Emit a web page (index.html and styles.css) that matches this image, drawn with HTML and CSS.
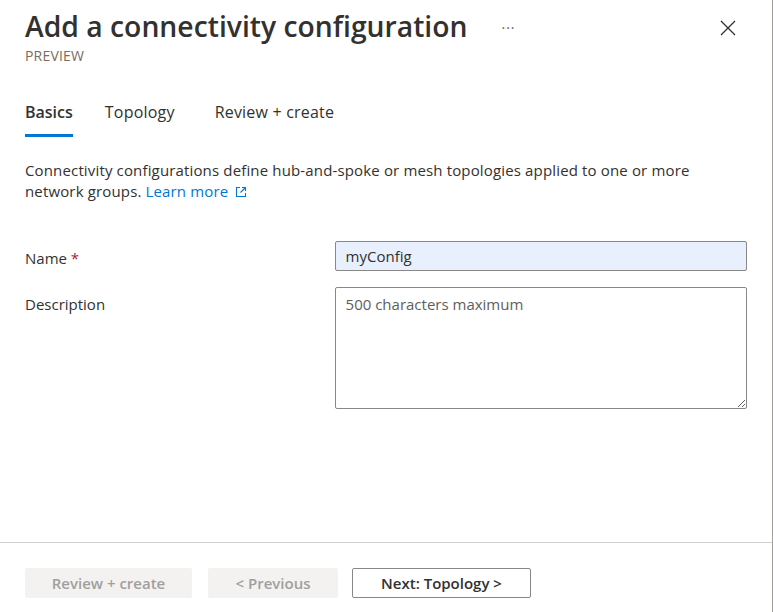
FILE: index.html
```html
<!DOCTYPE html>
<html lang="en">
<head>
<meta charset="utf-8">
<title>Add a connectivity configuration</title>
<link rel="stylesheet" href="styles.css">
</head>
<body>
<div class="blade">
  <div class="main">
    <header class="head">
      <div class="head-text">
        <div class="title-row">
          <h1 class="title">Add a connectivity configuration</h1>
          <span class="more">···</span>
        </div>
        <div class="preview">PREVIEW</div>
      </div>
      <button class="close" aria-label="Close">
        <svg width="16" height="16" viewBox="0 0 16 16"><path d="M1 1 L15 15 M15 1 L1 15" stroke="#323130" stroke-width="1.3" fill="none"/></svg>
      </button>
    </header>

    <nav class="tabs">
      <span class="tab active">Basics</span>
      <span class="tab">Topology</span>
      <span class="tab">Review + create</span>
    </nav>

    <p class="intro">Connectivity configurations define hub-and-spoke or mesh topologies applied to one or more network groups.<a class="link" href="#">Learn more<svg class="ext" width="12" height="12" viewBox="0 0 12 12"><path d="M5 1.5 H1.5 V10.5 H10.5 V7 M7 1.5 H10.5 V5 M10.5 1.5 L5.5 6.5" stroke="#0078d4" stroke-width="1.1" fill="none"/></svg></a></p>

    <div class="form">
      <div class="row">
        <label class="label">Name <span class="req">*</span></label>
        <input class="input" type="text" value="myConfig">
      </div>
      <div class="row">
        <label class="label">Description</label>
        <textarea class="textarea" placeholder="500 characters maximum"></textarea>
      </div>
    </div>
  </div>

  <footer class="footer">
    <button class="btn disabled">Review + create</button>
    <button class="btn disabled prev">&lt; Previous</button>
    <button class="btn primary">Next: Topology &gt;</button>
  </footer>
</div>
</body>
</html>
```

FILE: styles.css
```css
* { box-sizing: border-box; }
html, body { margin: 0; height: 100%; }
body {
  font-family: "Open Sans", "Noto Sans", sans-serif;
  color: #323130;
  background: #fff;
}
.blade {
  width: 773px;
  height: 612px;
  border-right: 1px solid #a19f9d;
  display: flex;
  flex-direction: column;
}
.main {
  flex: 1;
  padding: 0 25px;
}
.head {
  display: flex;
  justify-content: space-between;
  align-items: flex-start;
  padding-top: 8px;
}
.title-row {
  display: flex;
  align-items: center;
}
.title {
  margin: 0;
  font-size: 28.3px;
  font-weight: 600;
  line-height: 36px;
  letter-spacing: 0;
}
.more {
  margin-left: 34px;
  font-size: 14px;
  color: #605e5c;
  letter-spacing: 1px;
  position: relative;
  top: 1px;
}
.preview {
  font-size: 14px;
  letter-spacing: 0.2px;
  color: #7d6b5d;
  margin-top: 3px;
  line-height: 18px;
}
.close {
  border: 0;
  background: none;
  padding: 0;
  margin: 12px 11px 0 0;
  width: 16px;
  height: 16px;
  display: flex;
}
.tabs {
  display: flex;
  gap: 32px;
  margin-top: 35px;
}
.tab {
  font-size: 16px;
  letter-spacing: 0.2px;
  line-height: 24px;
  padding-bottom: 10px;
  border-bottom: 3px solid transparent;
  color: #323130;
}
.tab:nth-child(2) { margin-right: 8px; }
.tab.active {
  font-weight: 600;
  letter-spacing: 0;
  border-bottom-color: #0078d4;
}
.intro {
  margin: 23px 0 0;
  font-size: 15px;
  letter-spacing: 0.15px;
  line-height: 21px;
  color: #323130;
  max-width: 700px;
}
.link {
  color: #0078d4;
  text-decoration: none;
  margin-left: 4px;
}
.ext { vertical-align: -1px; margin-left: 7px; }
.form {
  margin-top: 39px;
  display: flex;
  flex-direction: column;
  gap: 16px;
}
.row {
  display: flex;
  align-items: flex-start;
}
.label {
  width: 310px;
  font-size: 15px;
  line-height: 20px;
  padding-top: 7px;
}
.req { color: #a4262c; }
.input, .textarea {
  width: 413px;
  border: 1px solid #8a8886;
  border-radius: 2px;
  font-family: inherit;
  font-size: 15px;
  color: #323130;
  padding: 0 10px;
}
.input {
  height: 30px;
  background: #e8f0fe;
}
.textarea {
  height: 122px;
  padding-top: 6px;
  resize: both;
  line-height: 20px;
}
.textarea::placeholder { color: #605e5c; }
.footer {
  border-top: 1px solid #d2d0ce;
  height: 70px;
  display: flex;
  align-items: flex-start;
  gap: 16px;
  padding: 25px 25px 0;
}
.btn {
  height: 30px;
  font-family: inherit;
  font-size: 15px;
  font-weight: 600;
  border-radius: 2px;
  padding: 0 10px;
  border: 1px solid transparent;
}
.btn.disabled {
  background: #f3f2f1;
  color: #a19f9d;
  width: 167px;
}
.btn.prev { width: 130px; }
.btn.primary {
  background: #fff;
  border-color: #8a8886;
  color: #323130;
  width: 179px;
  margin-left: -2px;
}
```
